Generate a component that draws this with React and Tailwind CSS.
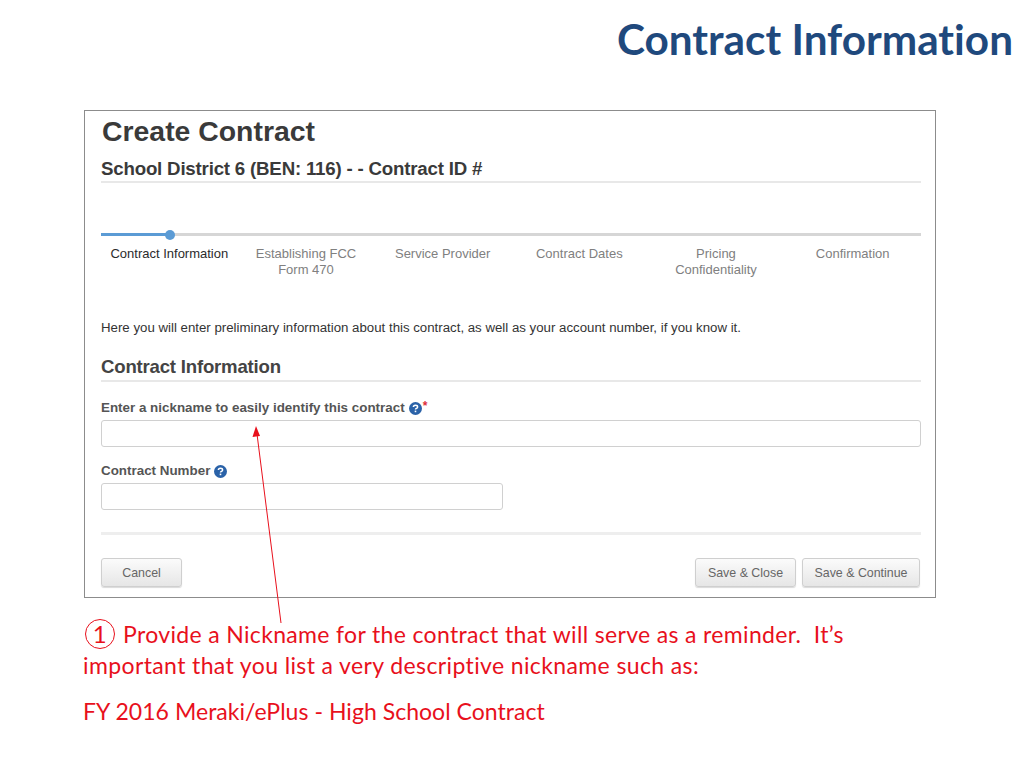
const steps = [
  ['Contract Information'],
  ['Establishing FCC', 'Form 470'],
  ['Service Provider'],
  ['Contract Dates'],
  ['Pricing', 'Confidentiality'],
  ['Confirmation'],
];

function HelpIcon() {
  return (
    <svg width="13" height="13" viewBox="0 0 13 13" className="shrink-0">
      <circle cx="6.5" cy="6.5" r="6.5" fill="#2a62a8" />
      <path d="M4.4 5.1c0-1.3 1-1.9 2.1-1.9 1.2 0 2.1.7 2.1 1.7 0 1.6-2.1 1.5-2.1 2.7" fill="none" stroke="#fff" strokeWidth="1.5" />
      <rect x="5.7" y="8.6" width="1.6" height="1.6" fill="#fff" />
    </svg>
  );
}

function GrayButton({ children, width }) {
  return (
    <button className={`h-[29px] rounded-[3px] border border-[#cfcfcf] bg-gradient-to-b from-[#fbfbfb] to-[#e6e6e6] pt-[1px] text-[12.4px] text-[#666] shadow-[0_1px_1px_rgba(0,0,0,0.15)] ${width}`}>
      {children}
    </button>
  );
}

export default function App() {
  return (
    <div className="relative h-[768px] w-[1024px] overflow-hidden bg-white font-['Liberation_Sans',Arial,sans-serif]">
      <div className="flex h-[110px] justify-end pr-[11px] pt-[14px]">
        <h1 className="font-['Lato',sans-serif] text-[42.3px] font-bold leading-[50px] [font-variant-ligatures:none] text-[#1f497d]">
          Contract Information
        </h1>
      </div>

      <div className="mx-[84px] h-[488px] w-[852px] border border-[#8c8c8c] pl-[16px] pr-[14px]">
        <h2 className="h-[40px] pl-[1px] pt-[3px] text-[28.4px] font-bold leading-[34px] text-[#3a3a3a]">Create Contract</h2>
        <div className="mt-[5px] h-[27px] border-b-2 border-[#e8e8e8] text-[18.7px] font-bold leading-[26px] tracking-[-0.2px] text-[#3a3a3a]">
          School District 6 (BEN: 116) - - Contract ID #
        </div>

        <div className="relative mt-[50px] h-[3px] bg-[#d6d6d6]">
          <div className="h-[3px] w-[68px] bg-[#5b9bd5]" />
          <div className="absolute left-[64px] top-[-3.5px] h-[10px] w-[10px] rounded-full bg-[#5b9bd5]" />
        </div>

        <div className="mt-[10px] grid h-[74px] grid-cols-6 text-center text-[13px] leading-[16px] text-[#808080]">
          {steps.map((lines, i) => (
            <div key={lines[0]} className={i === 0 ? 'text-[#2b2b2b]' : ''}>
              {lines.map((l) => (
                <div key={l}>{l}</div>
              ))}
            </div>
          ))}
        </div>

        <p className="h-[33px] text-[13.25px] leading-[16px] text-[#333]">
          Here you will enter preliminary information about this contract, as well as your account number, if you know it.
        </p>

        <h3 className="mt-[2px] h-[27px] border-b-2 border-[#e8e8e8] pb-[2px] text-[18.6px] font-bold leading-[24px] tracking-[-0.2px] text-[#444]">
          Contract Information
        </h3>

        <div className="mt-[18px] flex h-[16px] items-center gap-[4px] text-[13.4px] font-bold text-[#555]">
          Enter a nickname to easily identify this contract
          <HelpIcon />
          <span className="ml-[-3px] mt-[-4px] text-[12px] text-[#e0303a]">*</span>
        </div>
        <div className="mt-[4px] h-[27px] rounded-[3px] border border-[#d0d0d0]" />

        <div className="mt-[16px] flex h-[16px] items-center gap-[4px] text-[13.4px] font-bold text-[#555]">
          Contract Number
          <HelpIcon />
        </div>
        <div className="mt-[4px] h-[27px] w-[402px] rounded-[3px] border border-[#d0d0d0]" />

        <div className="mt-[22px] h-[3px] bg-[#eeeeee]" />

        <div className="mt-[23px] flex justify-between">
          <GrayButton width="w-[81px]">Cancel</GrayButton>
          <div className="mr-[1px] flex gap-[6px]">
            <GrayButton width="w-[101px]">Save &amp; Close</GrayButton>
            <GrayButton width="w-[118px]">Save &amp; Continue</GrayButton>
          </div>
        </div>
      </div>

      {/* callout arrow from the note up to the nickname field */}
      <svg className="absolute left-0 top-0" width="1024" height="768">
        <line x1="281" y1="623" x2="257" y2="434" stroke="#e8101c" strokeWidth="1" />
        <polygon points="256,426 252.5,437 260,436" fill="#e8101c" />
      </svg>

      <div className="ml-[83px] mt-[21px] w-[800px] font-['Lato',sans-serif] text-[23px] leading-[31px] [font-variant-ligatures:none] text-[#e8101c]">
        <p className="tracking-[0.34px]">
          <span className="ml-[2px] mr-[8px] inline-flex h-[30px] w-[30px] items-center justify-center rounded-full border border-[#e8101c] text-[24px] leading-none">1</span>
          Provide a Nickname for the contract that will serve as a reminder.&nbsp; It’s
        </p>
        <p className="tracking-[0.38px]">important that you list a very descriptive nickname such as:</p>
        <p className="mt-[15px] tracking-[0.04px]">FY 2016 Meraki/ePlus - High School Contract</p>
      </div>
    </div>
  );
}
